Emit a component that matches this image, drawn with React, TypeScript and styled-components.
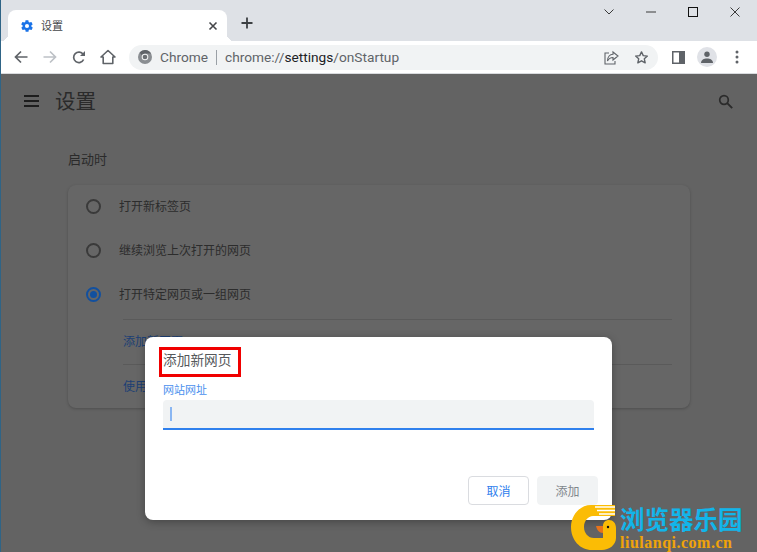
import React from 'react'
import styled, { createGlobalStyle } from 'styled-components'

const GlobalStyle = createGlobalStyle`
  html, body {
    margin: 0;
    padding: 0;
    background: #636363;
  }
  * {
    box-sizing: border-box;
  }
`

const cjk = `'Liberation Sans', 'Noto Sans CJK SC', sans-serif`

const Frame = styled.div`
  position: relative;
  width: 757px;
  height: 552px;
  overflow: hidden;
  border-left: 1px solid #2f6486;
  font-family: ${cjk};
  display: flex;
  flex-direction: column;
`

const TabStrip = styled.div`
  height: 41px;
  background: #dee1e6;
  display: flex;
  align-items: flex-end;
  padding-left: 7px;
  position: relative;
`

const Tab = styled.div`
  position: relative;
  width: 219px;
  height: 31px;
  background: #fff;
  border-radius: 8px 8px 0 0;
  display: flex;
  align-items: center;
  padding: 0 9px 0 12px;
  font-size: 11px;
  color: #45474a;

  &::before,
  &::after {
    content: '';
    position: absolute;
    bottom: 0;
    width: 7px;
    height: 7px;
  }
  &::before {
    left: -7px;
    background: radial-gradient(circle at 0 0, transparent 7px, #fff 7px);
  }
  &::after {
    right: -7px;
    background: radial-gradient(circle at 100% 0, transparent 7px, #fff 7px);
  }
`

const TabTitle = styled.span`
  margin-left: 7px;
  padding-bottom: 2px;
  flex: 1;
`

const NewTab = styled.div`
  margin: 0 0 5px 14px;
  height: 26px;
  display: flex;
  align-items: center;
`

const WindowControls = styled.div`
  position: absolute;
  top: 5px;
  right: 0;
  display: flex;
  padding-right: 1px;
`

const WindowButton = styled.div`
  width: 42px;
  height: 14px;
  display: flex;
  align-items: center;
  justify-content: center;
`

const Toolbar = styled.div`
  height: 33px;
  background: #fff;
  border-bottom: 1px solid #d9dbde;
  display: flex;
  align-items: center;
  padding-left: 12px;
`

const NavButton = styled.div<{ $gap?: number }>`
  width: 16px;
  height: 16px;
  margin-right: ${(p) => p.$gap ?? 13}px;
  display: flex;
  align-items: center;
  justify-content: center;
`

const Omnibox = styled.div`
  width: 529px;
  height: 25px;
  margin-left: -1px;
  background: #f1f3f4;
  border-radius: 13px;
  display: flex;
  align-items: center;
  padding-left: 9px;
  font-family: 'Roboto', 'Noto Sans', sans-serif;
  font-size: 13.7px;
  color: #5f6368;
`

const OriginChip = styled.span`
  margin-left: 8px;
`

const Divider = styled.span`
  width: 1px;
  height: 15px;
  background: #9aa0a6;
  margin: 0 8px;
`

const UrlPart = styled.span<{ $strong?: boolean }>`
  color: ${(p) => (p.$strong ? '#202124' : '#5f6368')};
`

const OmniActions = styled.div`
  margin-left: auto;
  display: flex;
  align-items: center;
  gap: 15px;
  padding-right: 9px;
`

const SidePanelButton = styled(NavButton)`
  margin-left: 12px;
  margin-right: 0;
`

const Avatar = styled.div`
  width: 20px;
  height: 20px;
  border-radius: 50%;
  background: #e0e2e7;
  display: flex;
  align-items: center;
  justify-content: center;
  margin: 0 18px 0 11px;
`

const Content = styled.div`
  flex: 1;
  background: #636363;
  position: relative;
`

const SettingsHeader = styled.div`
  height: 54px;
  display: flex;
  align-items: center;
  padding: 0 24px 0 23px;
  color: #1d1d1d;
`

const PageTitle = styled.div`
  font-size: 20.5px;
  margin-left: 15px;
  padding-bottom: 2px;
  color: #2a2a2a;
`

const SearchIcon = styled.div`
  margin-left: auto;
  display: flex;
`

const Section = styled.div`
  padding: 24px 0 0 67px;
`

const SectionTitle = styled.div`
  font-size: 13px;
  line-height: 16px;
  color: #2a2a2a;
`

const Card = styled.div`
  width: 622px;
  height: 223px;
  margin-top: 17px;
  background: #666666;
  border-radius: 8px;
  box-shadow: 0 1px 3px rgba(0, 0, 0, 0.22);
  padding: 0 18px;
`

const RadioGroup = styled.div`
  padding-bottom: 2px;
`

const RadioRow = styled.div`
  height: 44px;
  padding-bottom: 1px;
  display: flex;
  align-items: center;
  font-size: 12px;
  color: #2c2c2c;
`

const RadioLabel = styled.span`
  padding-bottom: 2px;
`

const Radio = styled.span<{ $on?: boolean }>`
  width: 15px;
  height: 15px;
  border-radius: 50%;
  border: 2px solid ${(p) => (p.$on ? '#12509f' : '#3a3a3a')};
  margin-right: 18px;
  display: flex;
  align-items: center;
  justify-content: center;
  &::after {
    content: '';
    display: ${(p) => (p.$on ? 'block' : 'none')};
    width: 7px;
    height: 7px;
    border-radius: 50%;
    background: #12509f;
  }
`

const LinkRow = styled.div`
  height: 45px;
  margin-left: 37px;
  padding-bottom: 4px;
  border-top: 1px solid #5a5a5a;
  display: flex;
  align-items: center;
  font-size: 12px;
  color: #1c3f74;
`

const Dialog = styled.div`
  position: absolute;
  left: 144px;
  top: 263px;
  width: 467px;
  height: 183px;
  background: #fff;
  border-radius: 8px;
  box-shadow: 0 2px 8px rgba(0, 0, 0, 0.3);
  padding: 14px 18px 0;
  display: flex;
  flex-direction: column;
`

const DialogTitle = styled.div`
  font-size: 13.7px;
  line-height: 20px;
  color: #55585b;
`

const Highlight = styled.div`
  position: absolute;
  left: 14px;
  top: 10px;
  width: 82px;
  height: 30px;
  border: 3px solid #f00000;
`

const FieldLabel = styled.label`
  margin-top: 12px;
  font-size: 11px;
  line-height: 14px;
  color: #4a90ee;
`

const FieldBox = styled.div`
  margin-top: 3px;
  width: 431px;
  height: 30px;
  background: #f1f3f4;
  border-radius: 4px 4px 0 0;
  border-bottom: 2px solid #2f80ed;
  display: flex;
  align-items: center;
  padding-left: 7px;
`

const Caret = styled.span`
  width: 2px;
  height: 14px;
  background: #8ab6f2;
`

const DialogFooter = styled.div`
  margin-top: auto;
  margin-bottom: 15px;
  margin-right: -4px;
  display: flex;
  justify-content: flex-end;
  gap: 8px;
`

const DialogButton = styled.div<{ $primary?: boolean }>`
  width: 61px;
  height: 29px;
  border-radius: 4px;
  font-size: 12px;
  display: flex;
  align-items: center;
  justify-content: center;
  background: ${(p) => (p.$primary ? '#f1f3f4' : '#fff')};
  border: 1px solid ${(p) => (p.$primary ? '#f1f3f4' : '#dadce0')};
  color: ${(p) => (p.$primary ? '#80868b' : '#2f80ed')};
`

const Watermark = styled.div`
  position: absolute;
  left: 570px;
  top: 505px;
  display: flex;
`

const WatermarkText = styled.div`
  margin-left: 3px;
  display: flex;
  flex-direction: column;
  font-family: 'Liberation Serif', 'Noto Sans CJK SC', serif;
`

const WatermarkName = styled.div`
  margin-top: 2px;
  font-size: 24.5px;
  line-height: 28px;
  font-weight: 700;
  color: #12b5ea;
`

const WatermarkUrl = styled.div`
  margin-top: -1px;
  font-size: 16px;
  line-height: 17px;
  font-weight: 700;
  letter-spacing: 0.5px;
  color: #f0a30a;
`

export default function App() {
  return (
    <>
      <GlobalStyle />
      <Frame>
        <TabStrip>
          <Tab>
            <svg width="14" height="14" viewBox="0 0 24 24">
              <path
                fill="#1a73e8"
                d="M19.4 13c.1-.3.1-.7.1-1s0-.7-.1-1l2.1-1.6c.2-.2.2-.4.1-.6l-2-3.5c-.1-.2-.4-.3-.6-.2l-2.5 1c-.5-.4-1.1-.7-1.7-1l-.4-2.6c0-.3-.2-.4-.5-.4h-4c-.3 0-.5.1-.5.4l-.4 2.6c-.6.3-1.2.6-1.7 1l-2.5-1c-.2-.1-.5 0-.6.2l-2 3.5c-.1.2-.1.4.1.6L4.6 11c0 .3-.1.7-.1 1s0 .7.1 1l-2.1 1.6c-.2.2-.2.4-.1.6l2 3.5c.1.2.4.3.6.2l2.5-1c.5.4 1.1.7 1.7 1l.4 2.6c0 .3.2.4.5.4h4c.3 0 .5-.1.5-.4l.4-2.6c.6-.3 1.2-.6 1.7-1l2.5 1c.2.1.5 0 .6-.2l2-3.5c.1-.2.1-.4-.1-.6zM12 15.5a3.5 3.5 0 1 1 0-7 3.5 3.5 0 0 1 0 7z"
              />
            </svg>
            <TabTitle>设置</TabTitle>
            <svg width="10" height="10" viewBox="0 0 10 10">
              <path d="M1.5 1.5l7 7M8.5 1.5l-7 7" stroke="#45474a" strokeWidth="1.6" />
            </svg>
          </Tab>
          <NewTab>
            <svg width="12" height="12" viewBox="0 0 12 12">
              <path d="M6 .5v11M.5 6h11" stroke="#3c4043" strokeWidth="1.8" />
            </svg>
          </NewTab>
          <WindowControls>
            <WindowButton>
              <svg width="10" height="6" viewBox="0 0 10 6">
                <path d="M.5.5L5 5l4.5-4.5" fill="none" stroke="#3a3a3a" />
              </svg>
            </WindowButton>
            <WindowButton>
              <svg width="10" height="2" viewBox="0 0 10 2">
                <path d="M0 1h10" stroke="#3a3a3a" />
              </svg>
            </WindowButton>
            <WindowButton>
              <svg width="10" height="10" viewBox="0 0 10 10">
                <rect x=".5" y=".5" width="9" height="9" fill="none" stroke="#111" />
              </svg>
            </WindowButton>
            <WindowButton>
              <svg width="10" height="10" viewBox="0 0 10 10">
                <path d="M.5.5l9 9M9.5.5l-9 9" stroke="#3a3a3a" />
              </svg>
            </WindowButton>
          </WindowControls>
        </TabStrip>
        <Toolbar>
          <NavButton>
            <svg width="14" height="14" viewBox="0 0 14 14">
              <path d="M13.5 7H1.5M7 1.5L1.5 7 7 12.5" fill="none" stroke="#5f6368" strokeWidth="1.7" />
            </svg>
          </NavButton>
          <NavButton>
            <svg width="14" height="14" viewBox="0 0 14 14">
              <path d="M.5 7h12M7 1.5L12.5 7 7 12.5" fill="none" stroke="#bdc1c6" strokeWidth="1.7" />
            </svg>
          </NavButton>
          <NavButton>
            <svg width="14" height="14" viewBox="0 0 14 14">
              <path d="M11.6 9.5a5.2 5.2 0 1 1-.4-5" fill="none" stroke="#5f6368" strokeWidth="1.7" />
              <path d="M13 1v5H8z" fill="#5f6368" />
            </svg>
          </NavButton>
          <NavButton $gap={14}>
            <svg width="16" height="16" viewBox="0 0 16 16">
              <path d="M8 1.5L1 8h2.2v6.500h9.6V8H15z" fill="none" stroke="#5f6368" strokeWidth="1.6" strokeLinejoin="round" />
            </svg>
          </NavButton>
          <Omnibox>
            <svg width="14" height="14" viewBox="0 0 14 14">
              <circle cx="7" cy="7" r="7" fill="#8a8e92" />
              <path d="M7 0a7 7 0 0 1 6.1 3.5H7a3.5 3.5 0 0 0-3.1 1.9L1.6 2.5A7 7 0 0 1 7 0z" fill="#5f6368" />
              <circle cx="7" cy="7" r="3.3" fill="#f1f3f4" />
              <circle cx="7" cy="7" r="2.3" fill="#6b6f73" />
            </svg>
            <OriginChip>Chrome</OriginChip>
            <Divider />
            <span>
              <UrlPart>chrome://</UrlPart>
              <UrlPart $strong>settings</UrlPart>
              <UrlPart>/onStartup</UrlPart>
            </span>
            <OmniActions>
              <svg width="15" height="15" viewBox="0 0 15 15">
                <path d="M9 2l5 4-5 4V7.5C6 7.5 4.5 9 3.5 11c0-4 2.5-6.500 5.500-6.700z" fill="none" stroke="#5f6368" strokeWidth="1.1" />
                <path d="M5 3H1v11h10v-3" fill="none" stroke="#5f6368" strokeWidth="1.1" />
              </svg>
              <svg width="15" height="15" viewBox="0 0 24 24">
                <path d="M12 3l2.8 6 6.6.7-4.9 4.4 1.4 6.5L12 17.3l-5.900 3.300 1.400-6.500-4.900-4.400 6.600-.7z" fill="none" stroke="#5f6368" strokeWidth="2.2" strokeLinejoin="round" />
              </svg>
            </OmniActions>
          </Omnibox>
          <SidePanelButton>
            <svg width="13" height="13" viewBox="0 0 13 13">
              <rect x=".75" y=".75" width="11.5" height="11.5" fill="#fff" stroke="#5f6368" strokeWidth="1.5" />
              <rect x="7" y="1" width="5" height="11" fill="#5f6368" />
            </svg>
          </SidePanelButton>
          <Avatar>
            <svg width="12" height="12" viewBox="0 0 12 12">
              <circle cx="6" cy="3.2" r="2.7" fill="#5f6368" />
              <path d="M0 12c0-3.2 3-4.5 6-4.5s6 1.3 6 4.5z" fill="#5f6368" />
            </svg>
          </Avatar>
          <svg width="4" height="14" viewBox="0 0 4 14">
            <circle cx="2" cy="2" r="1.5" fill="#5f6368" />
            <circle cx="2" cy="7" r="1.5" fill="#5f6368" />
            <circle cx="2" cy="12" r="1.5" fill="#5f6368" />
          </svg>
        </Toolbar>
        <Content>
          <SettingsHeader>
            <svg width="16" height="12" viewBox="0 0 16 12">
              <path d="M0 1h15M0 6h15M0 11h15" stroke="#1d1d1d" strokeWidth="1.8" />
            </svg>
            <PageTitle>设置</PageTitle>
            <SearchIcon>
              <svg width="15" height="15" viewBox="0 0 15 15">
                <circle cx="6" cy="6" r="4.3" fill="none" stroke="#2b2b2b" strokeWidth="1.7" />
                <path d="M9.2 9.2l5 5" stroke="#2b2b2b" strokeWidth="1.9" />
              </svg>
            </SearchIcon>
          </SettingsHeader>
          <Section>
            <SectionTitle>启动时</SectionTitle>
            <Card>
              <RadioGroup>
                <RadioRow>
                  <Radio />
                  <RadioLabel>打开新标签页</RadioLabel>
                </RadioRow>
                <RadioRow>
                  <Radio />
                  <RadioLabel>继续浏览上次打开的网页</RadioLabel>
                </RadioRow>
                <RadioRow>
                  <Radio $on />
                  <RadioLabel>打开特定网页或一组网页</RadioLabel>
                </RadioRow>
              </RadioGroup>
              <LinkRow>添加新网页</LinkRow>
              <LinkRow>使用当前网页</LinkRow>
            </Card>
          </Section>
          <Dialog>
            <Highlight />
            <DialogTitle>添加新网页</DialogTitle>
            <FieldLabel>网站网址</FieldLabel>
            <FieldBox>
              <Caret />
            </FieldBox>
            <DialogFooter>
              <DialogButton>取消</DialogButton>
              <DialogButton $primary>添加</DialogButton>
            </DialogFooter>
          </Dialog>
        </Content>
        <Watermark>
          <svg width="46" height="46" viewBox="0 0 46 46">
            <path
              d="M20 0H44V11H22C17 11 13 16 13 22C13 28 17 33 23 33H32V21C32 17 35 15 38 15C42 15 45 18 45 23V33C45 40 38 45 31 45H21C9 45 0 35 0 22C0 10 9 0 20 0Z"
              fill="#fbbc05"
            />
            <path d="M24 2h20M26 5.5h18M28 9h16" stroke="#fff" strokeWidth="1.4" />
            <path d="M25 21h7v7c-4 0-6-3-7-7z" fill="#e8731a" />
            <circle cx="37" cy="22" r="1.2" fill="#111" />
          </svg>
          <WatermarkText>
            <WatermarkName>浏览器乐园</WatermarkName>
            <WatermarkUrl>liulanqi.com.cn</WatermarkUrl>
          </WatermarkText>
        </Watermark>
      </Frame>
    </>
  )
}
